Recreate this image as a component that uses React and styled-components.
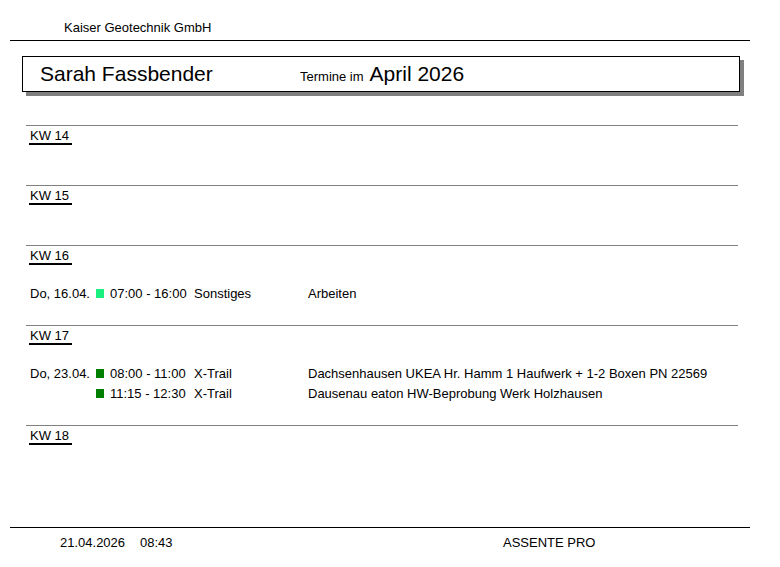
import React from "react";
import styled, { createGlobalStyle } from "styled-components";

const Global = createGlobalStyle`
  html, body { margin: 0; padding: 0; background: #fff; }
  body { font-family: "Liberation Sans", Arial, sans-serif; color: #000; }
`;

const Page = styled.div`
  width: 780px;
  height: 567px;
  display: flex;
  flex-direction: column;
  overflow: hidden;
`;

const Header = styled.header`
  margin: 0 30px 0 10px;
  padding: 20px 0 4px 54px;
  font-size: 13px;
  line-height: 16px;
  border-bottom: 1px solid #000;
`;

const TitleBox = styled.div`
  margin: 15px 0 0 22px;
  width: 718px;
  height: 36px;
  box-sizing: border-box;
  border: 1px solid #000;
  box-shadow: 4px 4px 0 #808080;
  display: flex;
  align-items: baseline;
  padding: 5px 0 0 17px;
`;

const Name = styled.span`
  width: 260px;
  font-size: 21px;
  line-height: 24px;
`;

const Small = styled.span`
  font-size: 13px;
  margin-right: 6px;
`;

const Month = styled.span`
  font-size: 21px;
  line-height: 24px;
`;

const Main = styled.main`
  flex: 1;
  margin: 33px 0 0 26px;
  width: 712px;
`;

const Section = styled.section`
  border-top: 1px solid #808080;
`;

const WeekLabel = styled.div`
  display: inline-block;
  margin: 1px 0 0 3px;
  padding: 0 3px 0 1px;
  font-size: 13px;
  line-height: 15px;
  border-bottom: 2px solid #000;
`;

const Rows = styled.div`
  padding: 18px 0 22px 4px;
`;

const Row = styled.div`
  display: grid;
  grid-template-columns: 66px 14px 84px 114px 1fr;
  align-items: center;
  height: 20px;
  font-size: 13px;
  white-space: nowrap;
`;

const Marker = styled.span`
  width: 8px;
  height: 9px;
  background: ${(p) => p.$color};
`;

const Footer = styled.footer`
  margin: 0 30px 0 10px;
  border-top: 1px solid #000;
  padding: 8px 0 17px 50px;
  display: grid;
  grid-template-columns: 80px 363px auto;
  font-size: 13px;
  line-height: 14px;
`;

const weeks = [
  { kw: "KW 14", rows: [] },
  { kw: "KW 15", rows: [] },
  {
    kw: "KW 16",
    rows: [
      { date: "Do, 16.04.", color: "#19f07f", time: "07:00 - 16:00", type: "Sonstiges", desc: "Arbeiten" },
    ],
  },
  {
    kw: "KW 17",
    rows: [
      { date: "Do, 23.04.", color: "#007f00", time: "08:00 - 11:00", type: "X-Trail", desc: "Dachsenhausen UKEA Hr. Hamm 1 Haufwerk + 1-2 Boxen PN 22569" },
      { date: "", color: "#007f00", time: "11:15 - 12:30", type: "X-Trail", desc: "Dausenau eaton HW-Beprobung Werk Holzhausen" },
    ],
  },
  { kw: "KW 18", rows: [] },
];

export default function App() {
  return (
    <>
      <Global />
      <Page>
        <Header>Kaiser Geotechnik GmbH</Header>
        <TitleBox>
          <Name>Sarah Fassbender</Name>
          <Small>Termine im</Small>
          <Month>April 2026</Month>
        </TitleBox>
        <Main>
          {weeks.map((w) => (
            <Section key={w.kw}>
              <WeekLabel>{w.kw}</WeekLabel>
              <Rows>
                {w.rows.map((r, i) => (
                  <Row key={i}>
                    <span>{r.date}</span>
                    <Marker $color={r.color} />
                    <span>{r.time}</span>
                    <span>{r.type}</span>
                    <span>{r.desc}</span>
                  </Row>
                ))}
              </Rows>
            </Section>
          ))}
        </Main>
        <Footer>
          <span>21.04.2026</span>
          <span>08:43</span>
          <span>ASSENTE PRO</span>
        </Footer>
      </Page>
    </>
  );
}
